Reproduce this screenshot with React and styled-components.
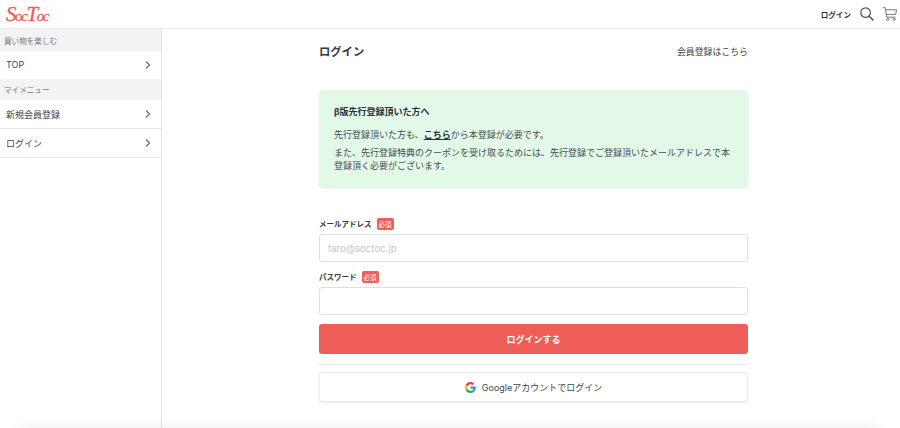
import React from "react";
import styled, { createGlobalStyle } from "styled-components";
import { FiChevronRight } from "react-icons/fi";

const GlobalStyle = createGlobalStyle`
  html, body {
    margin: 0;
    padding: 0;
    height: 100%;
    background: #fff;
    overflow: hidden;
  }
  body {
    font-family: "Inter", "Noto Sans CJK JP", sans-serif;
    color: #363a40;
  }
  * { box-sizing: border-box; }
`;

function SearchIcon() {
  return (
    <svg width="14" height="14" viewBox="0 0 14 14" fill="none" stroke="#555" strokeWidth="1.2">
      <circle cx="5.6" cy="5.6" r="4.8" />
      <path d="M9 9 13.4 13.4" strokeWidth="1.5" />
    </svg>
  );
}

function CartIcon() {
  return (
    <svg width="14" height="14" viewBox="0 0 14 14" fill="none" stroke="#777" strokeWidth="1">
      <path d="M.2.6h2l1.500 9.600h8.800" />
      <path d="M2.600 2.800h11l-1 4.600H3.200" />
      <circle cx="4.800" cy="12.300" r="1.100" />
      <circle cx="11.300" cy="12.300" r="1.100" />
    </svg>
  );
}

function GoogleIcon() {
  return (
    <svg width="11" height="11" viewBox="0 0 48 48">
      <path fill="#EA4335" d="M24 9.5c3.5 0 6.7 1.2 9.2 3.6l6.9-6.9C35.900 2.400 30.500 0 24 0 14.600 0 6.500 5.400 2.600 13.200l8 6.200C12.500 13.600 17.800 9.500 24 9.500z" />
      <path fill="#4285F4" d="M46.900 24.500c0-1.600-.1-3.100-.4-4.500H24v9h12.900c-.6 3-2.200 5.500-4.700 7.200l7.700 6c4.500-4.200 7-10.300 7-17.700z" />
      <path fill="#FBBC05" d="M10.500 28.600c-.5-1.400-.8-3-.8-4.600s.3-3.200.8-4.600l-8-6.200C.9 16.400 0 20.100 0 24s.9 7.600 2.600 10.800l7.900-6.200z" />
      <path fill="#34A853" d="M24 48c6.500 0 11.900-2.100 15.900-5.800l-7.700-6c-2.200 1.400-4.900 2.300-8.200 2.300-6.200 0-11.500-4.200-13.400-9.800l-8 6.200C6.500 42.600 14.600 48 24 48z" />
    </svg>
  );
}

export default function App() {
  return (
    <Page>
      <GlobalStyle />
      <Header>
        <Logo>
          <LogoCap>S</LogoCap>oc<LogoCap>T</LogoCap>oc
        </Logo>
        <HeaderActions>
          <HeaderLink>ログイン</HeaderLink>
          <SearchIcon />
          <CartIcon />
        </HeaderActions>
      </Header>
      <Body>
        <Sidebar>
          <SectionLabel $height={22}>買い物を楽しむ</SectionLabel>
          <MenuRow>
            TOP
            <FiChevronRight size={12} strokeWidth={2.4} color="#666" />
          </MenuRow>
          <SectionLabel $height={21}>マイメニュー</SectionLabel>
          <MenuRow $bordered>
            新規会員登録
            <FiChevronRight size={12} strokeWidth={2.4} color="#666" />
          </MenuRow>
          <MenuRow $bordered>
            ログイン
            <FiChevronRight size={12} strokeWidth={2.4} color="#666" />
          </MenuRow>
        </Sidebar>
        <Main>
          <Content>
            <TitleRow>
              <Title>ログイン</Title>
              <RegisterLink>会員登録はこちら</RegisterLink>
            </TitleRow>
            <Notice>
              <NoticeTitle>β版先行登録頂いた方へ</NoticeTitle>
              <NoticeText>
                先行登録頂いた方も、<NoticeLink>こちら</NoticeLink>から本登録が必要です。
              </NoticeText>
              <NoticeText>
                また、先行登録特典のクーポンを受け取るためには、先行登録でご登録頂いたメールアドレスで本登録頂く必要がございます。
              </NoticeText>
            </Notice>
            <Form>
              <LabelRow>
                メールアドレス<Required>必須</Required>
              </LabelRow>
              <Input placeholder="taro@soctoc.jp" />
              <LabelRow $second>
                パスワード<Required>必須</Required>
              </LabelRow>
              <Input type="password" />
              <SubmitButton>ログインする</SubmitButton>
              <Divider />
              <GoogleButton>
                <GoogleIcon />
                Googleアカウントでログイン
              </GoogleButton>
            </Form>
          </Content>
        </Main>
      </Body>
      <BottomShadow />
    </Page>
  );
}

const Page = styled.div`
  position: relative;
  width: 900px;
  height: 428px;
  overflow: hidden;
`;

const Header = styled.header`
  height: 29px;
  display: flex;
  align-items: center;
  justify-content: space-between;
  padding: 0 3px 0 6px;
  border-bottom: 1px solid #efefef;
`;

const Logo = styled.div`
  font-family: "Liberation Serif", serif;
  font-style: italic;
  font-size: 15px;
  letter-spacing: -1.4px;
  color: #ee5d58;
  -webkit-text-stroke: 0.3px #ee5d58;
`;

const LogoCap = styled.span`
  font-size: 21px;
`;

const HeaderActions = styled.div`
  display: flex;
  align-items: center;
  gap: 9px;
`;

const HeaderLink = styled.span`
  font-size: 7.6px;
  font-weight: 700;
  color: #333;
`;

const Body = styled.div`
  display: flex;
  height: 399px;
`;

const Sidebar = styled.aside`
  width: 162px;
  flex-shrink: 0;
  border-right: 1px solid #e4e4e4;
`;

const SectionLabel = styled.div`
  height: ${(p) => p.$height}px;
  display: flex;
  align-items: center;
  padding-left: 4px;
  background: #f3f3f3;
  font-size: 7.6px;
  color: #777;
`;

const MenuRow = styled.div`
  height: ${(p) => (p.$bordered ? "29px" : "28px")};
  display: flex;
  align-items: center;
  justify-content: space-between;
  padding: 0 7px ${(p) => (p.$bordered ? "0" : "1px")} 6px;
  font-size: 9px;
  color: #444;
  border-bottom: ${(p) => (p.$bordered ? "1px solid #e8e8e8" : "none")};
`;

const Main = styled.main`
  flex: 1;
  padding-left: 157px;
`;

const Content = styled.div`
  width: 429px;
`;

const TitleRow = styled.div`
  height: 61px;
  display: flex;
  align-items: flex-start;
  justify-content: space-between;
  padding-top: 14px;
`;

const Title = styled.h1`
  margin: 0;
  font-size: 11.3px;
  line-height: 18px;
  font-weight: 700;
  color: #363a40;
`;

const RegisterLink = styled.span`
  font-size: 8.9px;
  line-height: 18px;
  color: #444;
`;

const Notice = styled.section`
  height: 97px;
  padding: 15px 15px 0 15px;
  background: #e2f9e8;
  border-radius: 4px;
  box-shadow: 0 1px 2px rgba(0, 0, 0, 0.1);
`;

const NoticeTitle = styled.div`
  font-size: 9px;
  line-height: 13px;
  font-weight: 700;
  color: #2c3036;
  margin-bottom: 10px;
`;

const NoticeText = styled.p`
  margin: 0 0 5px;
  font-size: 9px;
  line-height: 13px;
  color: #484c52;
`;

const NoticeLink = styled.a`
  font-weight: 700;
  color: #2c3036;
  text-decoration: underline;
`;

const Form = styled.form`
  display: flex;
  flex-direction: column;
  padding-top: 29px;
`;

const LabelRow = styled.label`
  height: 15px;
  margin-top: ${(p) => (p.$second ? "7px" : "0")};
  margin-bottom: 3px;
  display: flex;
  align-items: center;
  gap: 5px;
  font-size: 7.5px;
  font-weight: 700;
  color: #363a40;
`;

const Required = styled.span`
  width: 17px;
  height: 12px;
  display: flex;
  align-items: center;
  justify-content: center;
  background: #ee5d58;
  border-radius: 2px;
  color: #fff;
  font-size: 6.5px;
  font-weight: 400;
`;

const Input = styled.input`
  width: 100%;
  height: 28px;
  padding: 0 8px;
  border: 1px solid #dcdfe3;
  border-radius: 3px;
  background: #fff;
  font-family: inherit;
  font-size: 9.6px;

  &::placeholder {
    color: #c4c8cd;
  }
`;

const SubmitButton = styled.button`
  height: 30px;
  margin-top: 9px;
  border: 0;
  border-radius: 3px;
  background: #ee5d58;
  color: #fff;
  font-family: inherit;
  font-size: 9px;
  font-weight: 700;
`;

const Divider = styled.hr`
  width: 100%;
  margin: 10px 0 7px;
  border: 0;
  border-top: 1px solid #ececec;
`;

const GoogleButton = styled.button`
  height: 30px;
  display: flex;
  align-items: center;
  justify-content: center;
  gap: 6px;
  border: 1px solid #ececec;
  border-radius: 3px;
  background: #fff;
  box-shadow: 0 1px 2px rgba(0, 0, 0, 0.08);
  color: #444;
  font-family: inherit;
  font-size: 9px;
`;

const BottomShadow = styled.div`
  position: absolute;
  left: 20px;
  right: 20px;
  top: 428px;
  height: 20px;
  box-shadow: 0 0 16px rgba(0, 0, 0, 0.08);
  pointer-events: none;
`;
